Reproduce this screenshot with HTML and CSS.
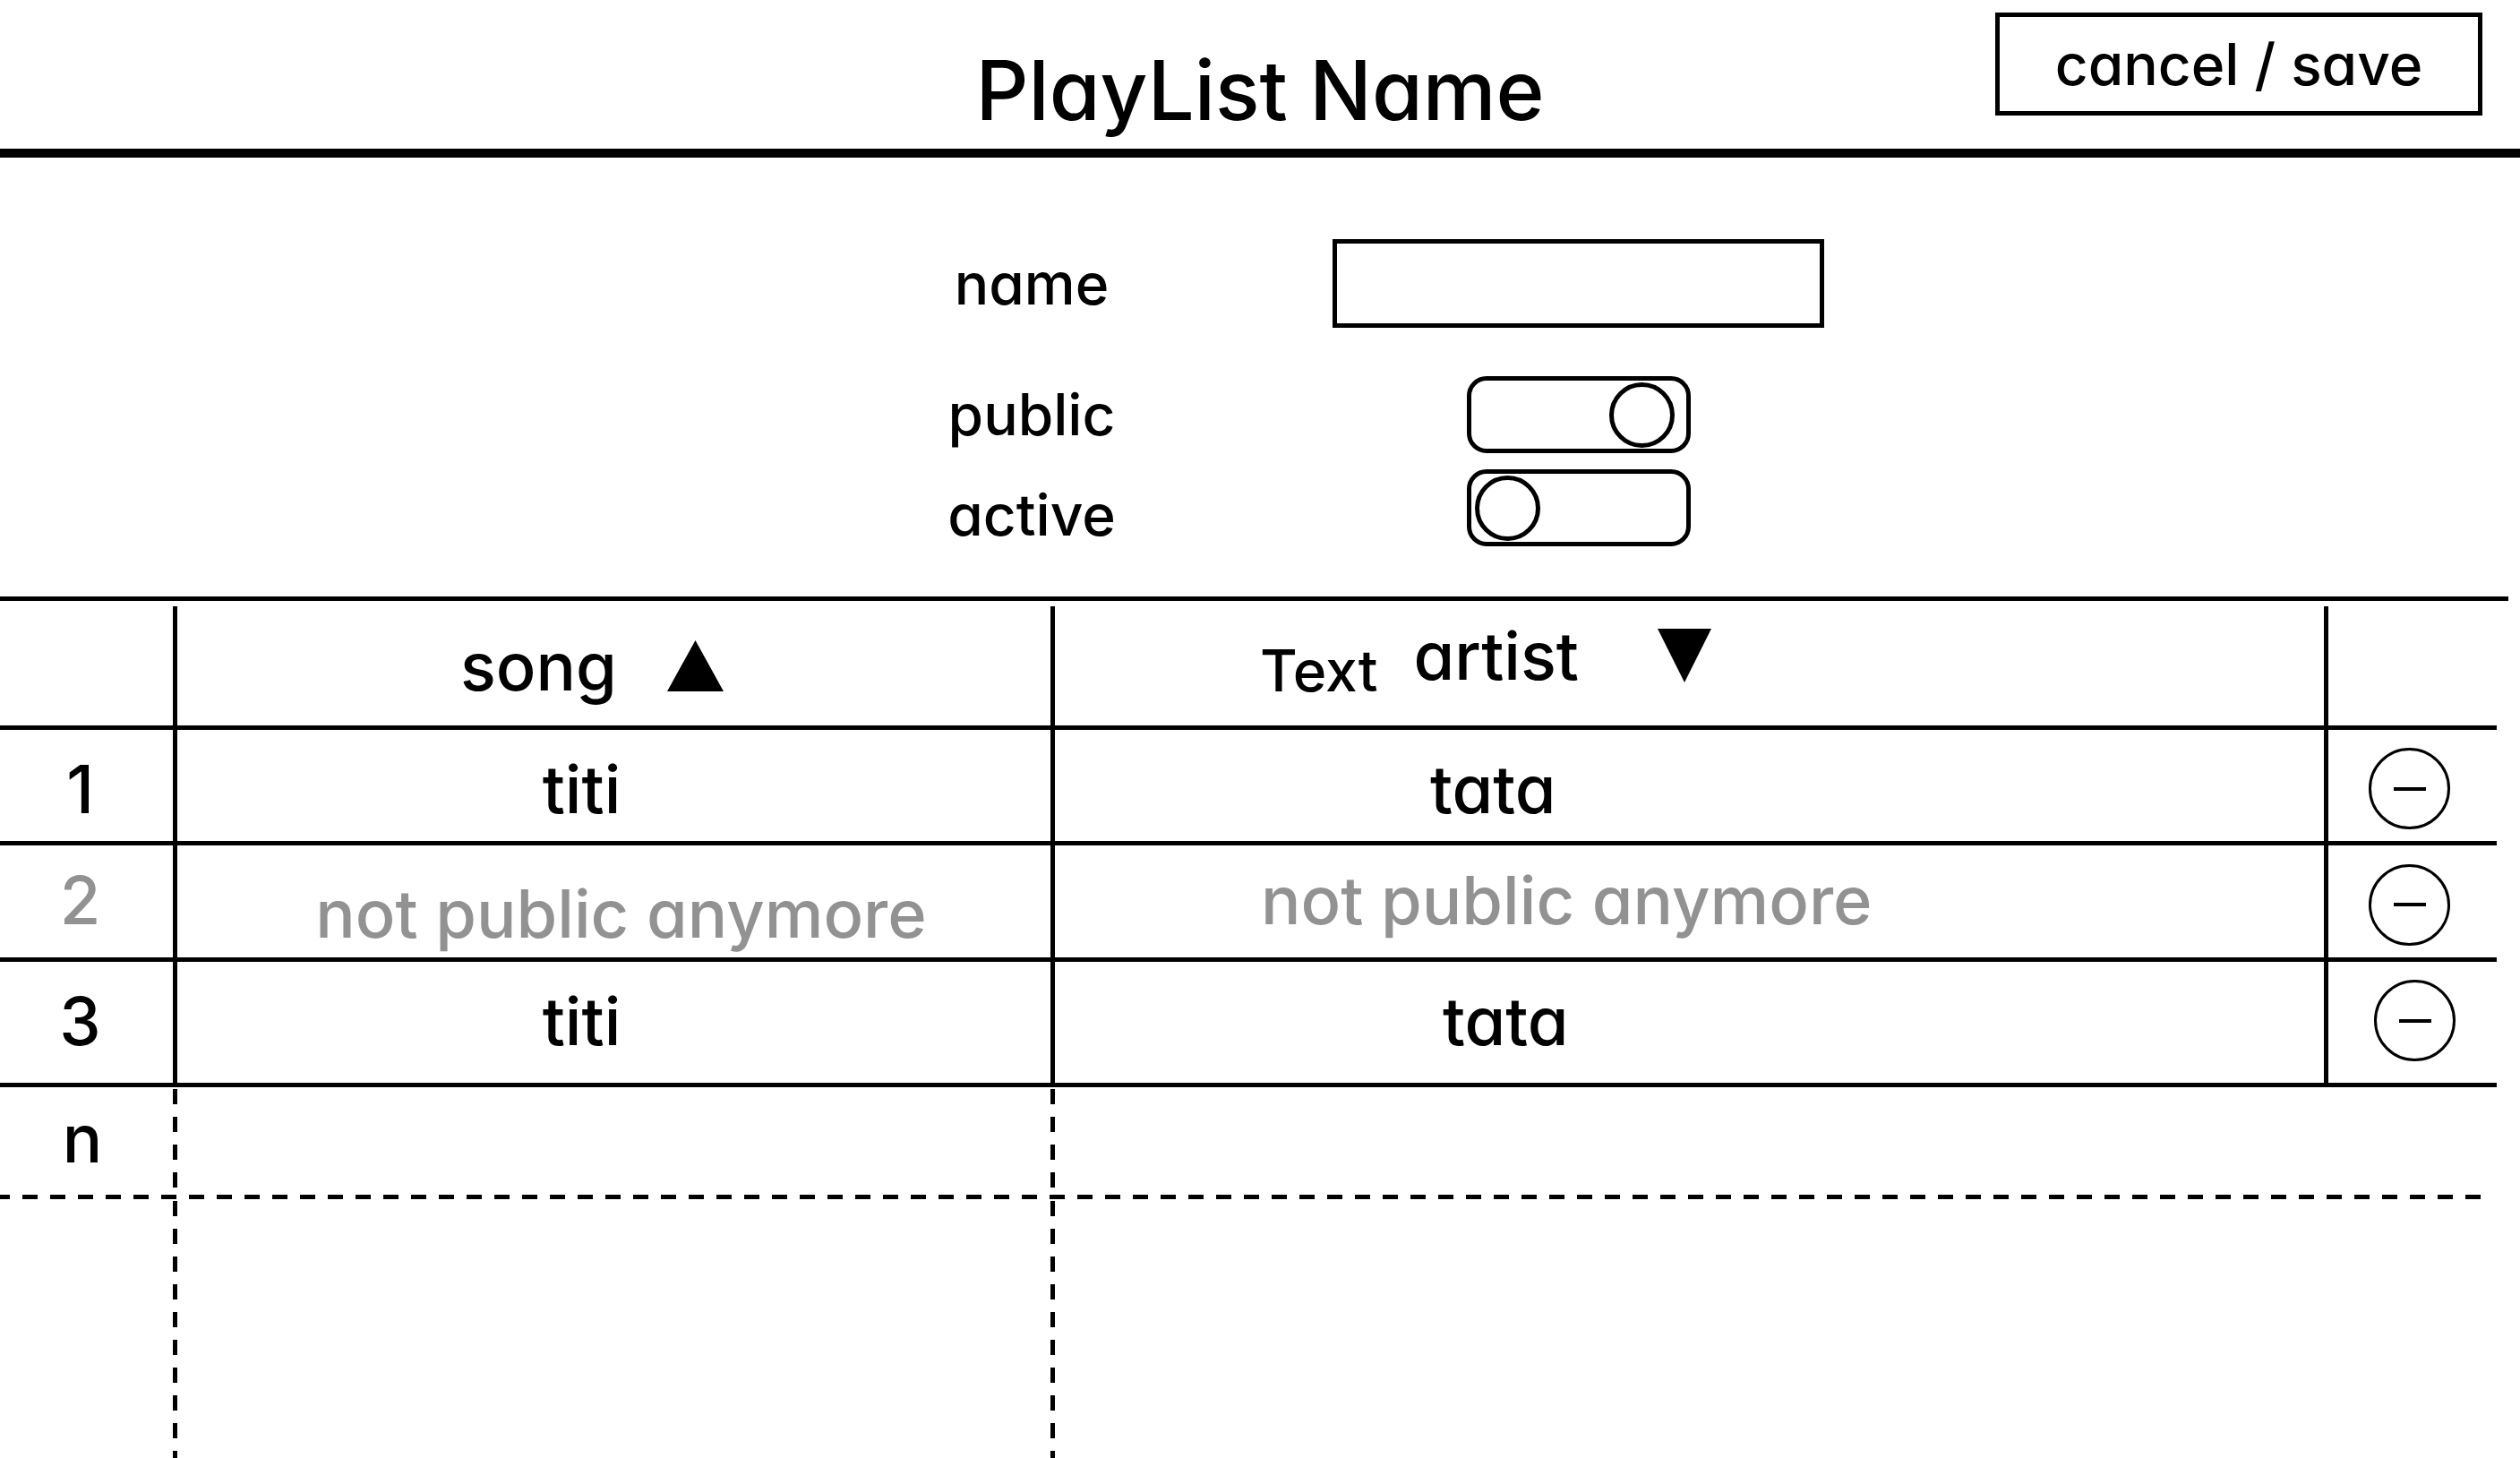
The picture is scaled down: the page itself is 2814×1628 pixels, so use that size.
FILE: index.html
```html
<!DOCTYPE html>
<html lang="en">
<head>
<meta charset="utf-8">
<title>PlayList Name</title>
<link rel="stylesheet" href="styles.css">
</head>
<body>
<header class="topbar">
  <h1 class="title">PlayList Name</h1>
  <button class="save-button" type="button">cancel / save</button>
</header>

<main>
  <form class="settings">
    <label class="label" for="name">name</label>
    <input class="text-input" id="name" type="text">
    <label class="label" for="public">public</label>
    <input class="toggle" id="public" type="checkbox" role="switch" checked>
    <label class="label label-low" for="active">active</label>
    <input class="toggle" id="active" type="checkbox" role="switch">
  </form>

  <section class="songs">
    <table class="song-table">
      <colgroup>
        <col class="col-index">
        <col class="col-song">
        <col class="col-artist">
        <col class="col-action">
      </colgroup>
      <thead>
        <tr class="head-row">
          <th></th>
          <th>
            <button class="sort sort-song" type="button">song
              <svg class="arrow-up" viewBox="0 0 63 57" aria-hidden="true"><path d="M31.500 0L63 57H0z"/></svg>
            </button>
          </th>
          <th>
            <div class="artist-head">
              <span class="note">Text</span>
              <button class="sort sort-artist" type="button">artist
                <svg class="arrow-down" viewBox="0 0 60 60" aria-hidden="true"><path d="M0 0H60L30 60z"/></svg>
              </button>
            </div>
          </th>
          <th></th>
        </tr>
      </thead>
      <tbody>
        <tr class="row">
          <td class="index low">1</td>
          <td class="song low">titi</td>
          <td class="artist low">tata</td>
          <td class="action low"><button class="remove" type="button" aria-label="Remove song 1"></button></td>
        </tr>
        <tr class="row muted">
          <td class="index high">2</td>
          <td class="song-wide">not public anymore</td>
          <td class="artist-wide high">not public anymore</td>
          <td class="action low"><button class="remove" type="button" aria-label="Remove song 2"></button></td>
        </tr>
        <tr class="row row-tall">
          <td class="index high">3</td>
          <td class="song high">titi</td>
          <td class="artist artist-in high">tata</td>
          <td class="action action-in high"><button class="remove" type="button" aria-label="Remove song 3"></button></td>
        </tr>
        <tr class="next-row">
          <td class="index next-index dashed">n</td>
          <td class="dashed"></td>
          <td></td>
          <td></td>
        </tr>
        <tr class="rest-row">
          <td class="dashed"></td>
          <td class="dashed"></td>
          <td></td>
          <td></td>
        </tr>
      </tbody>
    </table>
  </section>
</main>
</body>
</html>
```

FILE: styles.css
```css
*,
*::before {
  box-sizing: border-box;
}

body {
  margin: 0;
  background: #fff;
  color: #000;
  font-family: "Inter", sans-serif;
  font-weight: 500;
  font-size: 74px;
  line-height: 88px;
  font-feature-settings: "cv11";
}

button,
input {
  margin: 0;
  padding: 0;
  background: none;
  border: 0;
  border-radius: 0;
  color: inherit;
  font: inherit;
  font-feature-settings: inherit;
}

/* Top bar */
.topbar {
  display: grid;
  grid-template-columns: 1fr auto 1fr;
  height: 176px;
  border-bottom: 10px solid #000;
}

.title {
  grid-column: 2;
  margin: 0;
  padding-top: 46px;
  font-size: 92px;
  font-weight: 500;
  line-height: 110px;
}

.save-button {
  justify-self: end;
  width: 544px;
  height: 115px;
  margin: 14px 42px 0 0;
  border: 5px solid #000;
  font-size: 64px;
}

/* Playlist settings */
.settings {
  display: grid;
  grid-template-columns: 200px 549px;
  column-gap: 236px;
  align-items: center;
  justify-items: center;
  margin-left: calc(50% - 355px);
  padding: 91px 0 56px;
  font-size: 64px;
}

.label {
  line-height: 86px;
}

.label-low {
  padding-top: 8px;
  margin-bottom: -8px;
}

.text-input {
  width: 549px;
  height: 99px;
  margin-bottom: 54px;
  padding: 0 20px;
  border: 5px solid #000;
}

.label:first-child {
  margin-bottom: 54px;
}

.toggle {
  appearance: none;
  display: flex;
  align-items: center;
  width: 250px;
  height: 86px;
  padding: 0 4px;
  border: 5px solid #000;
  border-radius: 22px;
}

.toggle::before {
  content: "";
  width: 73px;
  height: 73px;
  border: 5px solid #000;
  border-radius: 50%;
}

.toggle:checked {
  justify-content: flex-end;
  margin-bottom: 18px;
  padding-right: 13px;
}

.label:nth-of-type(2) {
  margin-bottom: 18px;
}

/* Song table */
.songs {
  margin-right: 13px;
  padding-top: 6px;
  border-top: 5px solid #000;
}

.song-table {
  width: calc(100% - 13px);
  table-layout: fixed;
  border-collapse: separate;
  border-spacing: 0;
}

.col-index {
  width: 198px;
}

.col-song {
  width: 35.15%;
}

.col-action {
  width: 188px;
}

th,
td {
  padding: 0;
  text-align: left;
  font-weight: 500;
}

.head-row > *,
.row > * {
  border-right: 5px solid #000;
  border-bottom: 5px solid #000;
}

.head-row > :last-child,
.row > :last-child {
  border-right: 0;
}

.head-row {
  height: 138px;
}

.row {
  height: 130px;
}

.row:nth-child(1) {
  height: 129px;
}

.row-tall {
  height: 140px;
}

.low {
  padding-top: 7px;
}

.high {
  padding-bottom: 4px;
}

.sort {
  display: flex;
  align-items: center;
}

.sort-song {
  gap: 56px;
  margin-left: 316px;
}

.sort-artist {
  gap: 88px;
}

.arrow-up {
  width: 63px;
  height: 57px;
}

.arrow-down {
  width: 60px;
  height: 60px;
}

.artist-head {
  display: flex;
  align-items: flex-start;
  gap: 40px;
  height: 112px;
  padding-left: 229px;
}

.note {
  padding-top: 17px;
  font-size: 64px;
}

.index {
  padding-right: 14px;
  text-align: center;
}

.next-index {
  padding-bottom: 12px;
}

.song {
  padding-right: 72px;
  text-align: center;
}

.song-wide {
  padding: 26px 0 0 16px;
  text-align: center;
}

.artist {
  padding-left: 419px;
}

.artist-in {
  padding-left: 433px;
}

.artist-wide {
  padding-left: 230px;
}

.muted {
  color: #929292;
}

.action {
  padding-left: 45px;
}

.action-in {
  padding-left: 51px;
}

.remove {
  display: flex;
  align-items: center;
  justify-content: center;
  width: 91px;
  height: 91px;
  border: 3px solid #000;
  border-radius: 50%;
}

.remove::before {
  content: "";
  width: 36px;
  height: 4px;
  background: #000;
}

.next-row {
  height: 125px;
  background: repeating-linear-gradient(90deg, #000 0 11px, transparent 11px 25px, #000 25px 31px) left bottom / calc(100% - 18px) 5px no-repeat;
}

.rest-row {
  height: 289px;
}

.dashed {
  background: linear-gradient(#000 17px, transparent 17px) right 2px / 5px 31px repeat-y;
}
```
